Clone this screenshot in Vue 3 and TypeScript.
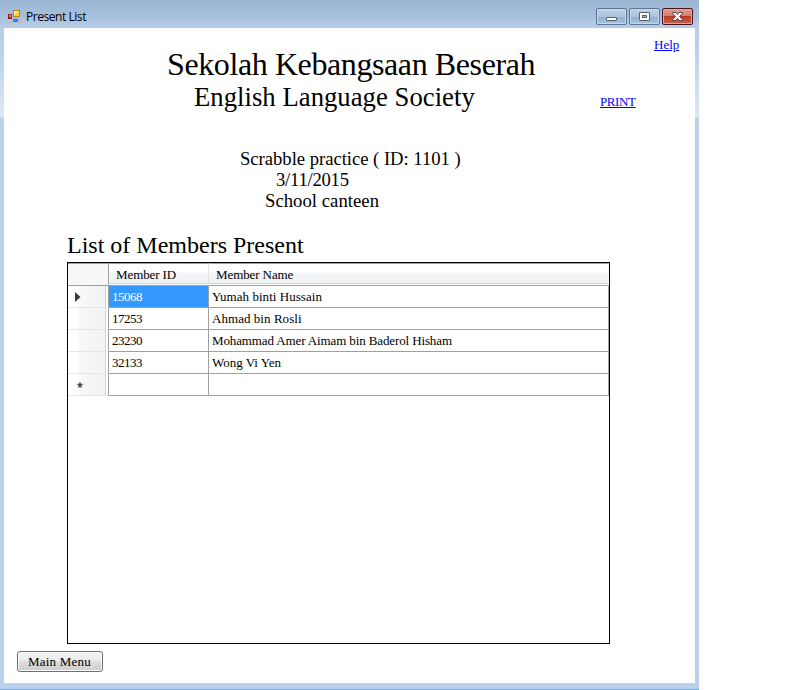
<script setup lang="ts">
import { ref } from 'vue'

interface Member {
  id: string
  name: string
  fit: string
}

const members = ref<Member[]>([
  { id: '15068', name: 'Yumah binti Hussain', fit: 'wide' },
  { id: '17253', name: 'Ahmad bin Rosli', fit: 'wide' },
  { id: '23230', name: 'Mohammad Amer Aimam bin Baderol Hisham', fit: 'tight' },
  { id: '32133', name: 'Wong Vi Yen', fit: 'normal' },
])
const selected = ref(0)
</script>

<template>
  <div class="window">
    <header class="titlebar">
      <svg class="app-icon" width="14" height="14" viewBox="0 0 14 14">
        <path d="M.5 4V.5H6M.5 10v3.500H6M11 13.500h2.500V8" fill="none" stroke="#b5b8bb" />
        <rect x="1" y="5" width="4" height="5" fill="#c9281c" />
        <path d="M1.500 5v4.500H5" fill="none" stroke="#8c1710" />
        <rect x="2" y="6" width="2" height="2" fill="#e8776a" />
        <rect x="6.500" y="1.500" width="6" height="6" fill="#ffd02e" stroke="#b8860b" />
        <path d="M7 2h5L7 6z" fill="#fff0a0" />
        <rect x="6" y="9" width="5" height="4" fill="#3f79dc" />
        <rect x="6" y="9" width="5" height="1" fill="#8db4f2" />
      </svg>
      <span class="caption">Present List</span>
      <div class="controls">
        <button class="control" aria-label="Minimize">
          <svg width="29" height="15" viewBox="0 0 29 15">
            <rect x="9.500" y="8.500" width="10" height="3" rx=".5" fill="#fff" stroke="#53606d" />
          </svg>
        </button>
        <button class="control" aria-label="Maximize">
          <svg width="29" height="15" viewBox="0 0 29 15">
            <rect x="9.500" y="3.500" width="10" height="8" rx=".5" fill="#fff" stroke="#53606d" />
            <rect x="12.500" y="6.500" width="4" height="2" fill="#9eb8d4" stroke="#53606d" />
          </svg>
        </button>
        <button class="control close" aria-label="Close">
          <svg width="29" height="15" viewBox="0 0 29 15">
            <path
              d="M9.500 3.500h3.300l1.700 1.900 1.700-1.900h3.300v.8l-2.900 3.200 2.900 3.200v.8h-3.300l-1.700-1.900-1.700 1.900H9.500v-.8l2.900-3.200-2.900-3.200z"
              fill="#fff" stroke="#5c3f47" />
          </svg>
        </button>
      </div>
    </header>

    <main class="client">
      <div class="top">
        <div class="headings">
          <h1>Sekolah Kebangsaan Beserah</h1>
          <h2>English Language Society</h2>
          <p class="event">Scrabble practice ( ID: 1101 )</p>
          <p class="date">3/11/2015</p>
          <p class="venue">School canteen</p>
        </div>
        <nav class="links">
          <a class="help" href="#">Help</a>
          <a class="print" href="#">PRINT</a>
        </nav>
      </div>

      <h3>List of Members Present</h3>
      <section class="grid">
        <div class="row head">
          <div class="corner"></div>
          <div class="th id">Member ID</div>
          <div class="th name">Member Name</div>
        </div>
        <div v-for="(m, i) in members" :key="m.id" class="row" @click="selected = i">
          <div class="marker">
            <svg v-if="selected === i" width="6" height="10" viewBox="0 0 6 10">
              <path d="M0 0L5.500 5 0 10z" fill="#3c3c3c" />
            </svg>
          </div>
          <div class="cell id" :class="{ selected: selected === i }">{{ m.id }}</div>
          <div class="cell name" :class="m.fit">{{ m.name }}</div>
        </div>
        <div class="row">
          <div class="marker fresh">
            <svg width="6" height="6" viewBox="0 0 6 6">
              <path d="M3 .5v3M.300 2.500h5.400M1.500 5.300L3 3l1.500 2.300" fill="none" stroke="#4a4a4a" stroke-width="1.500" />
            </svg>
          </div>
          <div class="cell id"></div>
          <div class="cell name"></div>
        </div>
      </section>

      <button class="menu">Main Menu</button>
    </main>
  </div>
</template>

<style>
body {
  background: #fff;
}
</style>

<style scoped>
.window {
  box-sizing: border-box;
  width: 699px;
  height: 690px;
  padding: 0 4px 6px;
  border-bottom: 1px solid #3cc4dc;
  background: linear-gradient(#9ab4d1 0, #a5bedb 14px, #b6cde8 28px, #b9d1ea 50px, #dce8f5 117px, #b9d1ea 118px);
  font-family: "Liberation Serif", "Times New Roman", serif;
  color: #000;
}
.titlebar {
  display: flex;
  height: 28px;
  padding: 0 2px 0 3px;
}
.app-icon {
  margin-top: 9px;
}
.caption {
  margin: 8px 0 0 5px;
  font: 12px/18px "Open Sans", "Noto Sans", sans-serif;
  letter-spacing: -0.45px;
}
.controls {
  display: flex;
  gap: 2px;
  margin: 8px 0 0 auto;
}
.control {
  box-sizing: border-box;
  width: 31px;
  height: 17px;
  padding: 0;
  border: 1px solid #5d7590;
  border-radius: 2px;
  background: linear-gradient(#bfd1e6 0, #adc4de 50%, #91adcd 51%, #a9c4e2);
  box-shadow: inset 0 0 0 1px #c8d8ea;
}
.control svg {
  display: block;
}
.close {
  border-color: #461520;
  background: linear-gradient(#dda095 0, #d0796b 48%, #b83a27 50%, #cb6350);
  box-shadow: inset 0 0 0 1px #dfa69c;
}
.client {
  height: 655px;
  background: #fff;
}
.top {
  display: flex;
  height: 203px;
}
.headings {
  width: 594px;
  padding-top: 17px;
  white-space: nowrap;
}
h1, h2, h3, p {
  margin: 0;
  font-weight: normal;
}
h1 {
  margin-left: 163px;
  padding-top: 1px;
  font-size: 32px;
  line-height: 36px;
  letter-spacing: -0.4px;
}
h2 {
  margin: 0 0 36px 190px;
  font-size: 26.67px;
  line-height: 30px;
  letter-spacing: 0.04px;
}
p {
  font-size: 18.67px;
  line-height: 21px;
}
.event { margin-left: 236px; letter-spacing: -0.03px; }
.date { margin-left: 272px; letter-spacing: -0.25px; }
.venue { margin-left: 261px; letter-spacing: 0.04px; }
.links {
  display: flex;
  flex-direction: column;
  align-items: flex-start;
  padding-top: 9px;
  font-size: 13px;
  line-height: 15px;
}
.links a {
  color: #00f;
}
.help { margin-left: 56px; }
.print { margin: 42px 0 0 2px; letter-spacing: -0.4px; }
h3 {
  margin: 0 0 3px 63px;
  font-size: 24px;
  line-height: 28px;
}
.grid {
  box-sizing: border-box;
  width: 543px;
  height: 382px;
  margin-left: 63px;
  border: 1px solid #000;
  font-size: 13px;
  line-height: 21px;
}
.row {
  display: flex;
  height: 22px;
}
.row > div {
  box-sizing: border-box;
  border-right: 1px solid #a0a0a0;
  border-bottom: 1px solid #a0a0a0;
}
.row.head {
  height: 23px;
}
.row.head > div {
  border-top: 1px solid #a0a0a0;
  background: linear-gradient(#fff 0, #fff 8px, #f6f7f9 9px, #eff1f3 19px, #d5d5d5 19px, #d5d5d5 20px, #fff 20px);
}
.row > .corner {
  width: 41px;
}
.row.head > .corner {
  background: #f6f7f8;
}
.row .id { width: 100px; }
.row .name { width: 400px; }
.th { padding-left: 7px; letter-spacing: -0.1px; }
.row.head > .th.id { border-right-color: #e3e4e6; }
.row.head > .th.name { border-right-color: #f7f7f7; }
.cell { padding-left: 3px; white-space: nowrap; }
.cell.id { letter-spacing: -0.5px; }
.cell.wide { letter-spacing: 0.05px; }
.cell.tight { letter-spacing: -0.12px; }
.cell.selected {
  background: #39f;
  color: #fff;
}
.row > .marker {
  display: flex;
  align-items: center;
  width: 41px;
  padding-left: 7px;
  border-bottom-color: #e4e5e7;
  background: linear-gradient(90deg, #fff 0, #fff 10px, #f7f8fa 11px, #f1f2f4 37px, #d5d5d5 37px, #d5d5d5 38px, #fff 38px);
}
.row > .fresh {
  padding: 1px 0 0 9px;
}
.menu {
  box-sizing: border-box;
  display: block;
  width: 86px;
  height: 21px;
  margin: 7px 0 0 13px;
  padding: 0 1px 0 0;
  border: 1px solid #707070;
  border-radius: 3px;
  background: linear-gradient(#f2f2f2 0, #ebebeb 49%, #dddddd 50%, #cfcfcf);
  box-shadow: inset 0 0 0 1px #fafafa;
  font: 13px/19px "Liberation Serif", "Times New Roman", serif;
  letter-spacing: 0.2px;
  color: #000;
}
</style>
